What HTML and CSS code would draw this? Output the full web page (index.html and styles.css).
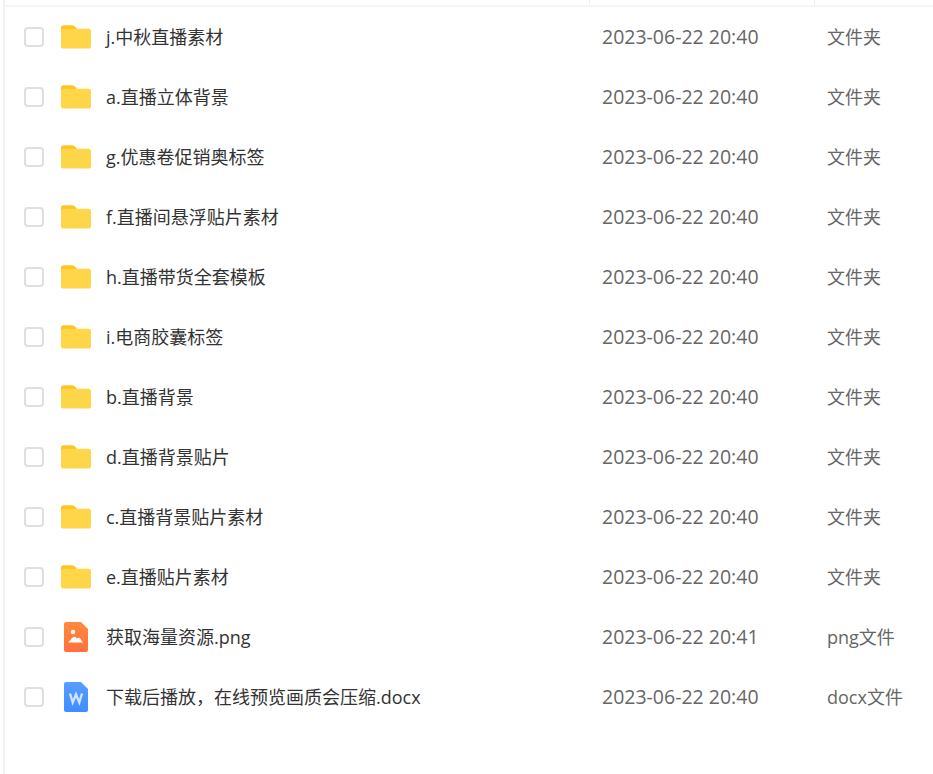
FILE: index.html
```html
<!DOCTYPE html>
<html lang="en">

<head>
  <meta charset="UTF-8" />
  <meta name="viewport" content="width=device-width, initial-scale=1.0">
  <title>文件列表</title>
  <link rel="stylesheet" href="styles.css">
</head>

<body>
  <svg class="sprites" width="0" height="0">
    <symbol id="folder" viewBox="0 0 31 24">
      <path d="M2.5 0h9c1 0 1.700.4 2.400 1l2.600 2.500H28.500c1.400 0 2.500 1.100 2.500 2.500v15.500c0 1.400-1.100 2.500-2.500 2.500h-26C1.100 24 0 22.900 0 21.500v-19C0 1.100 1.100 0 2.500 0z" fill="#ffd64a" />
      <path d="M2.500 0h9c1 0 1.700.4 2.400 1l2.600 2.500H3C1.500 3.500.4 4.200 0 5.500v-3C0 1.100 1.100 0 2.500 0z" fill="#ffc21f" />
    </symbol>
    <symbol id="image" viewBox="0 0 24 30">
      <defs>
        <linearGradient id="orange" x1="0" y1="0" x2="0" y2="1">
          <stop offset="0" stop-color="#ff8a3c" />
          <stop offset="1" stop-color="#ff7040" />
        </linearGradient>
      </defs>
      <path d="M2 0h15l7 7v21a2 2 0 0 1-2 2H2a2 2 0 0 1-2-2V2a2 2 0 0 1 2-2z" fill="url(#orange)" />
      <circle cx="9" cy="10" r="2.200" fill="#fff" />
      <path d="M4 20.500c1.500-1 3-4 5.500-5.500 1.500-.8 2.500.5 3.500 1.500 1-.8 2-1 3-.2 1 .8 1.500 3 3 4.200z" fill="#fff" />
    </symbol>
    <symbol id="word" viewBox="0 0 24 30">
      <defs>
        <linearGradient id="blue" x1="0" y1="0" x2="0" y2="1">
          <stop offset="0" stop-color="#5a9dff" />
          <stop offset="1" stop-color="#3d8eff" />
        </linearGradient>
      </defs>
      <path d="M2 0h15l7 7v21a2 2 0 0 1-2 2H2a2 2 0 0 1-2-2V2a2 2 0 0 1 2-2z" fill="url(#blue)" />
      <path d="M6 11.500l2.700 9 3.300-8 3.300 8 2.700-9" fill="none" stroke="#cfe2ff" stroke-width="2.400" />
    </symbol>
  </svg>

  <div class="file-list">
    <div class="list-head">
      <div></div>
      <div></div>
      <div></div>
    </div>

    <div class="file-row">
      <span class="check"></span>
      <svg class="icon"><use href="#folder" /></svg>
      <span class="name">j.中秋直播素材</span>
      <span class="date">2023-06-22 20:40</span>
      <span class="type">文件夹</span>
    </div>
    <div class="file-row">
      <span class="check"></span>
      <svg class="icon"><use href="#folder" /></svg>
      <span class="name">a.直播立体背景</span>
      <span class="date">2023-06-22 20:40</span>
      <span class="type">文件夹</span>
    </div>
    <div class="file-row">
      <span class="check"></span>
      <svg class="icon"><use href="#folder" /></svg>
      <span class="name">g.优惠卷促销奥标签</span>
      <span class="date">2023-06-22 20:40</span>
      <span class="type">文件夹</span>
    </div>
    <div class="file-row">
      <span class="check"></span>
      <svg class="icon"><use href="#folder" /></svg>
      <span class="name">f.直播间悬浮贴片素材</span>
      <span class="date">2023-06-22 20:40</span>
      <span class="type">文件夹</span>
    </div>
    <div class="file-row">
      <span class="check"></span>
      <svg class="icon"><use href="#folder" /></svg>
      <span class="name">h.直播带货全套模板</span>
      <span class="date">2023-06-22 20:40</span>
      <span class="type">文件夹</span>
    </div>
    <div class="file-row">
      <span class="check"></span>
      <svg class="icon"><use href="#folder" /></svg>
      <span class="name">i.电商胶囊标签</span>
      <span class="date">2023-06-22 20:40</span>
      <span class="type">文件夹</span>
    </div>
    <div class="file-row">
      <span class="check"></span>
      <svg class="icon"><use href="#folder" /></svg>
      <span class="name">b.直播背景</span>
      <span class="date">2023-06-22 20:40</span>
      <span class="type">文件夹</span>
    </div>
    <div class="file-row">
      <span class="check"></span>
      <svg class="icon"><use href="#folder" /></svg>
      <span class="name">d.直播背景贴片</span>
      <span class="date">2023-06-22 20:40</span>
      <span class="type">文件夹</span>
    </div>
    <div class="file-row">
      <span class="check"></span>
      <svg class="icon"><use href="#folder" /></svg>
      <span class="name">c.直播背景贴片素材</span>
      <span class="date">2023-06-22 20:40</span>
      <span class="type">文件夹</span>
    </div>
    <div class="file-row">
      <span class="check"></span>
      <svg class="icon"><use href="#folder" /></svg>
      <span class="name">e.直播贴片素材</span>
      <span class="date">2023-06-22 20:40</span>
      <span class="type">文件夹</span>
    </div>
    <div class="file-row">
      <span class="check"></span>
      <svg class="icon doc"><use href="#image" /></svg>
      <span class="name">获取海量资源.png</span>
      <span class="date">2023-06-22 20:41</span>
      <span class="type">png文件</span>
    </div>
    <div class="file-row">
      <span class="check"></span>
      <svg class="icon doc"><use href="#word" /></svg>
      <span class="name">下载后播放，在线预览画质会压缩.docx</span>
      <span class="date">2023-06-22 20:40</span>
      <span class="type">docx文件</span>
    </div>
  </div>
</body>

</html>
```

FILE: styles.css
```css
html,
body {
  height: 100%;
}

body {
  margin: 0;
  background: #fff;
  font-family: "Open Sans", "Noto Sans CJK SC", sans-serif;
  font-size: 18px;
  overflow: hidden;
}

.sprites {
  position: absolute;
}

.file-list {
  margin-left: 3px;
  min-height: 100%;
  border-left: 2px solid #f2f2f2;
}

.list-head {
  display: grid;
  grid-template-columns: 585px 225px 1fr;
  height: 5px;
  border-bottom: 2px solid #f5f5f5;
}

.list-head div {
  border-right: 1px solid #eee;
}

.list-head div:last-child {
  border-right: 0;
}

.file-row {
  display: grid;
  grid-template-columns: 19px 20px 17px 30px 15px 496px 225px 1fr;
  align-items: center;
  height: 60px;
}

.check {
  grid-column: 2;
  width: 16px;
  height: 16px;
  border: 2px solid #dfdfdf;
  border-radius: 4px;
}

.icon {
  grid-column: 4;
  width: 30px;
  height: 24px;
}

.icon.doc {
  width: 24px;
  height: 30px;
  margin-left: 3px;
}

.name {
  grid-column: 6;
  color: #333;
  padding-bottom: 2px;
}

.date {
  color: #666;
  font-size: 19.5px;
  padding-bottom: 2px;
}

.type {
  color: #666;
  padding-bottom: 2px;
}
```
